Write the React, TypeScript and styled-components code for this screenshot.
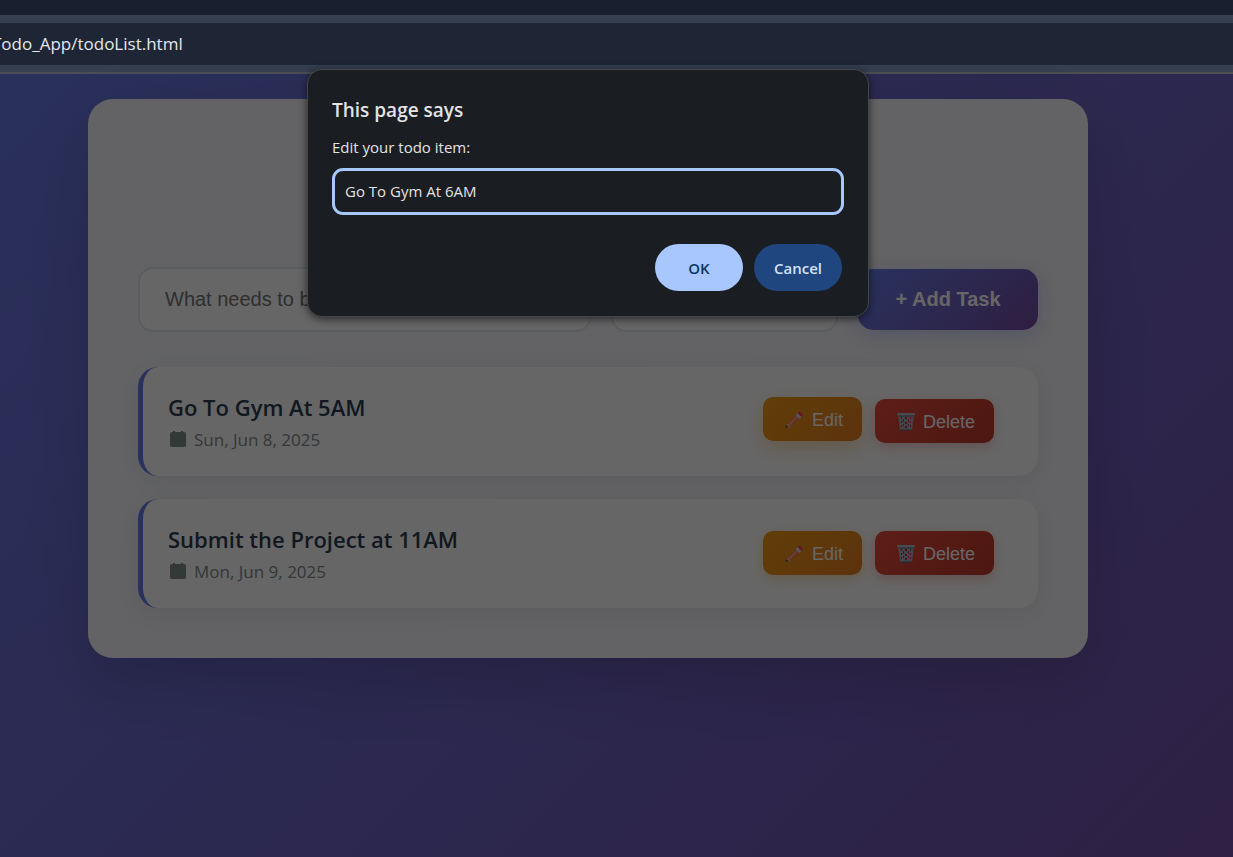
import React from "react";
import styled, { createGlobalStyle } from "styled-components";

const GlobalStyle = createGlobalStyle`
  *, *::before, *::after { box-sizing: border-box; }
  html, body, #root { height: 100%; }
  body { margin: 0; font-family: "Open Sans", "Noto Sans", sans-serif; }
  button, input { font: inherit; }
`;

const Browser = styled.div`
  position: relative;
  display: flex;
  flex-direction: column;
  min-height: 100%;
`;

const TabStrip = styled.div`
  height: 15px;
  background: #182030;
`;

const Toolbar = styled.header`
  padding: 8px 0 7px;
  background: #353f50;
  border-bottom: 2px solid #4b4e52;
`;

const AddressBar = styled.div`
  display: flex;
  align-items: center;
  height: 42px;
  overflow: hidden;
  background: #1e2636;
  color: #e4e7ec;
  font-size: 17px;
  line-height: 24px;
`;

const Address = styled.span`
  margin-left: -8px;
`;

const Page = styled.main`
  position: relative;
  flex: 1;
  padding: 25px 57px 50px 0;
  background: linear-gradient(135deg, #667eea -12%, #764ba2 118%);
`;

const Scrim = styled.div`
  position: absolute;
  inset: 0;
  background: rgba(0, 0, 0, 0.6);
`;

const Card = styled.section`
  max-width: 1000px;
  margin: 0 auto;
  padding: 168px 50px 50px;
  border-radius: 25px;
  background: rgba(255, 255, 255, 0.95);
  box-shadow: 0 25px 62px rgba(0, 0, 0, 0.15);
`;

const TaskForm = styled.form`
  display: grid;
  grid-template-columns: 2fr 1fr 180px;
  align-items: center;
  gap: 20px;
  margin-bottom: 35px;
`;

const Field = styled.input`
  width: 100%;
  min-width: 0;
  height: 65px;
  padding: 0 25px;
  border: 2px solid #e1e8ed;
  border-radius: 15px;
  background: #fff;
  color: #757575;
  font-family: "Liberation Sans", Arial, sans-serif;
  font-size: 20px;
  &::placeholder { color: #757575; opacity: 1; }
`;

const AddButton = styled.button`
  height: 61px;
  border: 0;
  border-radius: 15px;
  background: linear-gradient(135deg, #667eea, #764ba2);
  box-shadow: 0 5px 19px rgba(102, 126, 234, 0.3);
  color: #fff;
  font-family: "Liberation Sans", Arial, sans-serif;
  font-size: 20px;
  font-weight: 700;
`;

const TaskList = styled.ul`
  display: flex;
  flex-direction: column;
  gap: 23px;
  margin: 0;
  padding: 0;
  list-style: none;
`;

const TaskRow = styled.li`
  display: flex;
  align-items: center;
  justify-content: space-between;
  height: 109px;
  padding: 0 44px 0 25px;
  border-left: 5px solid #667eea;
  border-radius: 20px;
  background: #fff;
  box-shadow: 0 5px 25px rgba(0, 0, 0, 0.08);
`;

const TaskText = styled.div`
  padding-top: 5px;
`;

const TaskTitle = styled.h2`
  margin: 0;
  color: #2c3e50;
  font-size: 22px;
  font-weight: 600;
  line-height: 32px;
`;

const TaskDate = styled.p`
  display: flex;
  align-items: center;
  gap: 7px;
  margin: 0;
  color: #7f8c8d;
  font-size: 17px;
  line-height: 34px;
`;

const Actions = styled.div`
  display: flex;
  gap: 13px;
  padding-bottom: 2px;
`;

const tones = {
  edit: { fill: "linear-gradient(135deg, #f39c12, #e67e22)", glow: "rgba(243, 156, 18, 0.3)" },
  remove: { fill: "linear-gradient(135deg, #e74c3c, #c0392b)", glow: "rgba(231, 76, 60, 0.3)" },
};

const ActionButton = styled.button<{ $tone: keyof typeof tones; $raised?: boolean }>`
  display: flex;
  align-items: center;
  gap: 7px;
  height: 44px;
  padding: 3px 19px 0 21px;
  border: 0;
  border-radius: 10px;
  background: ${(p) => tones[p.$tone].fill};
  box-shadow: ${(p) => (p.$raised ? "0 8px 19px" : "0 4px 12px")} ${(p) => tones[p.$tone].glow};
  transform: ${(p) => (p.$raised ? "translateY(-2px)" : "none")};
  color: #fff;
  font-family: "Liberation Sans", Arial, sans-serif;
  font-size: 18px;
`;

const DialogLayer = styled.div`
  position: absolute;
  inset: 69px 57px auto 0;
  display: flex;
  justify-content: center;
`;

const Dialog = styled.form`
  width: 562px;
  padding: 24px 24px 25px;
  border: 1px solid #43474a;
  border-radius: 15px;
  background: #1a1d21;
  box-shadow: 0 2px 8px rgba(0, 0, 0, 0.6);
  color: #e3e3e3;
`;

const DialogTitle = styled.h1`
  margin: 0 0 9px;
  font-size: 19px;
  font-weight: 600;
  line-height: 32px;
`;

const DialogLabel = styled.label`
  display: block;
  margin-bottom: 8px;
  font-size: 15px;
  line-height: 25px;
`;

const DialogInput = styled.input`
  display: block;
  width: 100%;
  height: 47px;
  padding: 0 10px 2px;
  border: 3px solid #a8c7fa;
  border-radius: 11px;
  outline: 0;
  background: #1a1d21;
  color: #e3e3e3;
  font-size: 15px;
`;

const DialogButtons = styled.div`
  display: flex;
  justify-content: flex-end;
  gap: 11px;
  margin-top: 29px;
  padding-right: 2px;
`;

const DialogButton = styled.button<{ $primary?: boolean }>`
  width: 88px;
  height: 47px;
  padding: 0;
  border: 0;
  border-radius: 24px;
  background: ${(p) => (p.$primary ? "#a8c7ff" : "#1f467f")};
  color: ${(p) => (p.$primary ? "#0a3560" : "#d3e3fd")};
  font-size: 15px;
  font-weight: 600;
`;

const CalendarIcon = () => (
  <svg width="19" height="18" viewBox="0 0 19 18" aria-hidden="true">
    <path d="M5 0h2v1h6V0h2v1h1a2 2 0 0 1 2 2v11a2 2 0 0 1-2 2H4a2 2 0 0 1-2-2V3a2 2 0 0 1 2-2h1z" fill="#7f8c8d" />
  </svg>
);

const PencilIcon = () => (
  <svg width="21" height="20" viewBox="0 0 20 20" aria-hidden="true">
    <path d="M1 18l2-5 4 4z" fill="#f2c9a5" />
    <path d="M1 18l1-3 2 2z" fill="#3f3a48" />
    <path d="M2.5 13.5L12 4l4 4-9.500 9.500z" fill="#f4794f" />
    <path d="M3.500 14.500L13 5l1.500 1.500L5 16z" fill="#ff9d70" />
    <path d="M11 5l2-2 4 4-2 2z" fill="#c9d8e8" />
    <path d="M13 3l1-1q1-1 2 0l2 2q1 1 0 2l-1 1z" fill="#ee4057" />
  </svg>
);

const TrashIcon = () => (
  <svg width="20" height="20" viewBox="0 0 20 20" aria-hidden="true">
    <path d="M2 2h16l-2 16H4z" fill="#a3adba" />
    <path
      d="M5 5h1v2H5zM9 5h2v2H9zM14 5h1v2h-1zM7 7h1v3H7zM12 7h1v3h-1zM5 9h1v2H5zM9 10h2v2H9zM14 9h1v2h-1zM7 12h1v2H7zM12 12h1v2h-1zM5 13h1v2H5zM9 14h2v2H9zM14 13h1v2h-1z"
      fill="#c4303c"
    />
    <path d="M3 4h14M4 18h12" stroke="#5d6470" strokeWidth="1" />
    <rect x="1" y="1" width="18" height="2" rx="1" fill="#b4bec9" />
  </svg>
);

const tasks = [
  { title: "Go To Gym At 5AM", date: "Sun, Jun 8, 2025", active: true },
  { title: "Submit the Project at 11AM", date: "Mon, Jun 9, 2025", active: false },
];

export default function App() {
  return (
    <Browser>
      <GlobalStyle />
      <TabStrip />
      <Toolbar>
        <AddressBar>
          <Address>Todo_App/todoList.html</Address>
        </AddressBar>
      </Toolbar>
      <Page>
        <Card>
          <TaskForm>
            <Field aria-label="New task" placeholder="What needs to be done?" />
            <Field aria-label="Due date" type="date" />
            <AddButton type="button">+ Add Task</AddButton>
          </TaskForm>
          <TaskList>
            {tasks.map((task) => (
              <TaskRow key={task.title}>
                <TaskText>
                  <TaskTitle>{task.title}</TaskTitle>
                  <TaskDate>
                    <CalendarIcon />
                    {task.date}
                  </TaskDate>
                </TaskText>
                <Actions>
                  <ActionButton type="button" $tone="edit" $raised={task.active}>
                    <PencilIcon />
                    Edit
                  </ActionButton>
                  <ActionButton type="button" $tone="remove">
                    <TrashIcon />
                    Delete
                  </ActionButton>
                </Actions>
              </TaskRow>
            ))}
          </TaskList>
        </Card>
        <Scrim />
      </Page>
      <DialogLayer>
        <Dialog role="dialog" aria-labelledby="dialog-title">
          <DialogTitle id="dialog-title">This page says</DialogTitle>
          <DialogLabel htmlFor="todo-edit">Edit your todo item:</DialogLabel>
          <DialogInput id="todo-edit" defaultValue="Go To Gym At 6AM" />
          <DialogButtons>
            <DialogButton type="button" $primary>OK</DialogButton>
            <DialogButton type="button">Cancel</DialogButton>
          </DialogButtons>
        </Dialog>
      </DialogLayer>
    </Browser>
  );
}
